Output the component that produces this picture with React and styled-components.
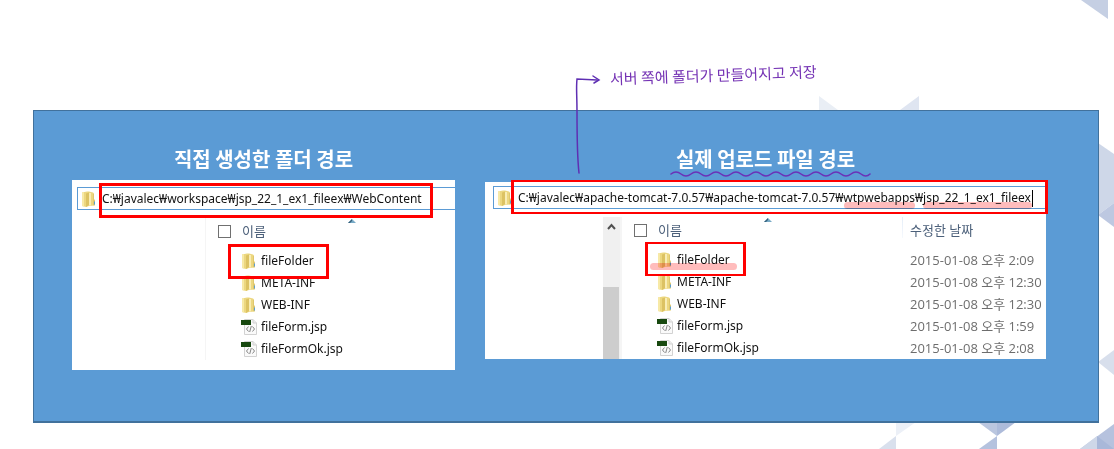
import React from "react";
import styled, { createGlobalStyle } from "styled-components";

const Global = createGlobalStyle`
  * { box-sizing: border-box; }
  body {
    margin: 0;
    background: #fff;
    overflow-x: hidden;
    font-family: "Noto Sans", "Noto Sans CJK KR", sans-serif;
    font-size: 12px;
    color: #111;
  }
`;

const Page = styled.main`
  position: relative;
  padding: 110px 15px 26px 33px;
`;

const Backdrop = styled.svg`
  position: absolute;
  top: 0;
  right: 0;
`;

const Panel = styled.section`
  position: relative;
  display: grid;
  grid-template-columns: 383fr 561fr;
  column-gap: 30px;
  align-items: start;
  padding: 34px 52px 51px 38px;
  background: #5b9bd5;
  border: 1px solid #41719c;
  border-bottom-width: 2px;
`;

const Column = styled.article`
  position: relative;
  min-width: 0;
  display: flex;
  flex-direction: column;
  gap: ${(p) => p.$gap}px;
`;

const Heading = styled.h2`
  position: relative;
  align-self: center;
  margin: 0;
  font: 700 20px/28px "Noto Sans CJK KR", sans-serif;
  color: #fff;
  white-space: nowrap;
`;

const Wave = styled.svg`
  position: absolute;
  left: -6px;
  top: 25px;
`;

const Arrow = styled.svg`
  position: absolute;
  left: 86px;
  top: -75px;
`;

const Note = styled.p`
  position: absolute;
  left: 125px;
  top: -82px;
  margin: 0;
  font: 400 15px/24px "Noto Sans CJK KR", sans-serif;
  color: #7432b4;
  white-space: nowrap;
  transform: rotate(-2deg);
`;

const Explorer = styled.div`
  background: #fff;
  padding-bottom: ${(p) => p.$bottom}px;
`;

const AddressBar = styled.div`
  position: relative;
  padding: ${(p) => p.$top}px 0 8px ${(p) => p.$left}px;
`;

const AddressField = styled.label`
  display: flex;
  align-items: center;
  gap: 5px;
  height: 23px;
  padding-left: 3px;
  border: 1px solid #5b9bd5;
  border-right: 0;
`;

const PathInput = styled.input`
  flex: 1;
  min-width: 0;
  height: 21px;
  padding: 0;
  border: 0;
  outline: 0;
  background: transparent;
  font: inherit;
  color: #111;
`;

const Caret = styled.span`
  position: absolute;
  left: 547px;
  top: 8px;
  width: 1px;
  height: 17px;
  background: #000;
`;

const Frame = styled.span`
  position: absolute;
  z-index: 1;
  left: ${(p) => p.$x}px;
  top: ${(p) => p.$y}px;
  width: ${(p) => p.$w}px;
  height: ${(p) => p.$h}px;
  border: solid #f00;
  border-width: ${(p) => (p.$thin ? "2px 3px" : "3px")};
  pointer-events: none;
`;

const Highlight = styled.span`
  position: absolute;
  left: ${(p) => p.$x}px;
  top: ${(p) => p.$y}px;
  width: ${(p) => p.$w}px;
  height: 7px;
  border-radius: 4px;
  background: #ffbcbc;
  mix-blend-mode: multiply;
  pointer-events: none;
`;

const Body = styled.div`
  display: flex;
  align-items: stretch;
`;

const NavPane = styled.div`
  flex: 0 0 ${(p) => p.$w}px;
`;

const ScrollBar = styled.div`
  flex: 0 0 17px;
  display: flex;
  flex-direction: column;
  align-items: center;
  padding-top: 6px;
  background: #f0f0f0;
`;

const Thumb = styled.div`
  flex: 1;
  align-self: stretch;
  margin: 56px 1px 0 0;
  background: #cdcdcd;
`;

const FileTable = styled.table`
  flex: 1;
  min-width: 0;
  table-layout: fixed;
  border-collapse: collapse;
  border-left: ${(p) => p.$edge}px solid #f5f5f5;
`;

const HeadCell = styled.th`
  position: relative;
  height: 32px;
  padding: 0 0 0 ${(p) => (p.$date ? 8 : 12)}px;
  width: ${(p) => (p.$date ? "143px" : "auto")};
  vertical-align: top;
  text-align: left;
  font-weight: 400;
  font-size: 13px;
  line-height: 26px;
  color: #4c607a;
  ${(p) => p.$date && "background: linear-gradient(#e4edf8, #f6f9fd) no-repeat 0 0 / 1px 21px;"}
`;

const NameHead = styled.label`
  display: flex;
  align-items: center;
  gap: 11px;
`;

const Tick = styled.input`
  appearance: none;
  width: 13px;
  height: 13px;
  margin: 0;
  border: 1px solid #707070;
  background: #fff;
`;

const SortMark = styled.svg`
  position: absolute;
  left: 142px;
  top: 1px;
`;

const Cell = styled.td`
  height: 22px;
  padding: 0 0 0 ${(p) => (p.$date ? 8 : 35)}px;
  font-family: ${(p) => (p.$date ? '"Open Sans"' : '"Noto Sans"')}, "Noto Sans CJK KR", sans-serif;
  font-size: ${(p) => (p.$date ? 13 : 12)}px;
  line-height: 22px;
  white-space: nowrap;
  color: ${(p) => (p.$date ? "#6d6d6d" : "#111")};
  position: relative;
`;

const FileName = styled.span`
  display: flex;
  align-items: center;
  gap: 4px;
`;

const FolderIcon = () => (
  <svg width="16" height="16" viewBox="0 0 16 16" aria-hidden="true">
    <path d="M1 1.500 6 .5h2l4 1 1 1V8l1 1v5.500L8 15l-3 1-4-1z" fill="#ecd780" />
    <path d="M1 1.500 3 1v14.400l-2-.4z" fill="#f7e9a6" />
    <path d="M5 2.500 8 1.500V14l-3 2z" fill="#dcc263" />
    <path d="M8 2h2v12.500H8z" fill="#f9edb5" />
    <path d="M12 3h1v6l1 .5v4.500l-2 .3z" fill="#dfc76d" />
    <path d="M13.500 10.500v3" stroke="#5c9ed0" />
  </svg>
);

const JspIcon = () => (
  <svg width="16" height="16" viewBox="0 0 16 16" aria-hidden="true">
    <path d="M3.500.5h8.500l3.500 3.500v11.500h-12z" fill="#fafafa" stroke="#d2d2d2" />
    <path d="M12 .5V4h3.500" fill="#ececec" stroke="#d2d2d2" />
    <path d="M0 1h10v5H0z" fill="#17480f" />
    <path d="m7.500 7.500-2 2.500 2 2.500M11.500 7.500l2 2.500-2 2.500M10.300 7l-1.600 6" fill="none" stroke="#858585" />
  </svg>
);

const files = [
  { name: "fileFolder", date: "2015-01-08 오후 2:09", folder: true },
  { name: "META-INF", date: "2015-01-08 오후 12:30", folder: true },
  { name: "WEB-INF", date: "2015-01-08 오후 12:30", folder: true },
  { name: "fileForm.jsp", date: "2015-01-08 오후 1:59" },
  { name: "fileFormOk.jsp", date: "2015-01-08 오후 2:08" },
];

const Files = ({ dated, edge, children }) => (
  <FileTable $edge={edge}>
    <thead>
      <tr>
        <HeadCell scope="col">
          <NameHead>
            <Tick type="checkbox" />
            이름
          </NameHead>
          <SortMark width="8" height="5" viewBox="0 0 8 5" aria-hidden="true">
            <path d="M0 4 4 0l4 4z" fill="#78aac6" />
            <path d="M0 4 4 0v2L2 4z" fill="#34617c" />
          </SortMark>
        </HeadCell>
        {dated && <HeadCell scope="col" $date>수정한 날짜</HeadCell>}
      </tr>
    </thead>
    <tbody>
      {files.map((f, i) => (
        <tr key={f.name}>
          <Cell>
            <FileName>
              {f.folder ? <FolderIcon /> : <JspIcon />}
              {f.name}
            </FileName>
            {i === 0 && children}
          </Cell>
          {dated && <Cell $date>{f.date}</Cell>}
        </tr>
      ))}
    </tbody>
  </FileTable>
);

const Triangles = () => (
  <Backdrop width="300" height="449" viewBox="814 0 300 449" aria-hidden="true">
    <path d="M1081 0h27v19z" fill="#c5cfe3" />
    <path d="M819 96v14h19z" fill="#e9eef5" />
    <path d="M919 96v14h-19z" fill="#dfe5f1" />
    <path d="M1098 143l16 11v49l-16 12z" fill="#ced7e8" />
    <path d="M1098 215l16-12v24z" fill="#bdc8e1" />
    <path d="M1098 362l16-12v25z" fill="#d8dfec" />
    <path d="M896 422h20l-20 14z" fill="#ecf0f7" />
    <path d="M896 436v13h-17z" fill="#d9e0ed" />
    <path d="M978 422h19v14z" fill="#bac6df" />
    <path d="M997 422h19l-19 14z" fill="#adbbda" />
    <path d="M997 436v13h-18z" fill="#b5c2de" />
    <path d="M1114 424v25h-34z" fill="#b6c2de" />
    <path d="M1080 449l17-13v13z" fill="#ced7e8" />
    <path d="M1097 436l17 13h-17z" fill="#a9b8d9" />
  </Backdrop>
);

export default function App() {
  return (
    <Page>
      <Global />
      <Triangles />
      <Panel>
        <Column $gap={7}>
          <Heading>직접 생성한 폴더 경로</Heading>
          <Explorer $bottom={10}>
            <AddressBar $top={7} $left={5}>
              <AddressField>
                <FolderIcon />
                <PathInput
                  aria-label="폴더 경로"
                  readOnly
                  value="C:₩javalec₩workspace₩jsp_22_1_ex1_fileex₩WebContent"
                />
              </AddressField>
              <Frame $x={27} $y={3} $w={334} $h={35} />
            </AddressBar>
            <Body>
              <NavPane $w={133} />
              <Files edge={1}>
                <Frame $x={22} $y={-6} $w={101} $h={35} />
              </Files>
            </Body>
          </Explorer>
        </Column>

        <Column $gap={9}>
          <Note>서버 쪽에 폴더가 만들어지고 저장</Note>
          <Arrow width="32" height="106" viewBox="0 0 32 106" fill="none" stroke="#5f2fb3" strokeWidth="1.500" strokeLinecap="round" aria-hidden="true">
            <path d="M8 103C6 85 6 60 6 42S5 18 6 9l20 1" />
            <path d="M22 6l6 4-5 3" />
          </Arrow>
          <Heading>
            실제 업로드 파일 경로
            <Wave width="202" height="8" viewBox="0 0 202 8" fill="none" stroke="#6a32b8" strokeWidth="1.600" strokeLinecap="round" aria-hidden="true">
              <path d="M1 4q5-4 10 0t10 0t10 0t10 0t10 0t10 0t10 0t10 0t10 0t10 0t10 0t10 0t10 0t10 0t10 0t10 0t10 0t10 0t10 0t9 0" />
            </Wave>
          </Heading>
          <Explorer $bottom={0}>
            <AddressBar $top={4} $left={8}>
              <AddressField>
                <FolderIcon />
                <PathInput
                  aria-label="업로드 경로"
                  readOnly
                  value="C:₩javalec₩apache-tomcat-7.0.57₩apache-tomcat-7.0.57₩wtpwebapps₩jsp_22_1_ex1_fileex"
                />
              </AddressField>
              <Highlight $x={359} $y={20} $w={71} />
              <Highlight $x={438} $y={20} $w={109} />
              <Caret />
              <Frame $thin $x={26} $y={-2} $w={537} $h={34} />
            </AddressBar>
            <Body>
              <NavPane $w={118} />
              <ScrollBar>
                <svg width="9" height="8" viewBox="0 0 9 8" aria-hidden="true">
                  <path d="M1 6l3.500-4L8 6" fill="none" stroke="#505050" strokeWidth="2" />
                </svg>
                <Thumb />
              </ScrollBar>
              <Files dated edge={2}>
                <Highlight $x={28} $y={14} $w={87} />
                <Frame $thin $x={23} $y={-7} $w={101} $h={34} />
              </Files>
            </Body>
          </Explorer>
        </Column>
      </Panel>
    </Page>
  );
}
